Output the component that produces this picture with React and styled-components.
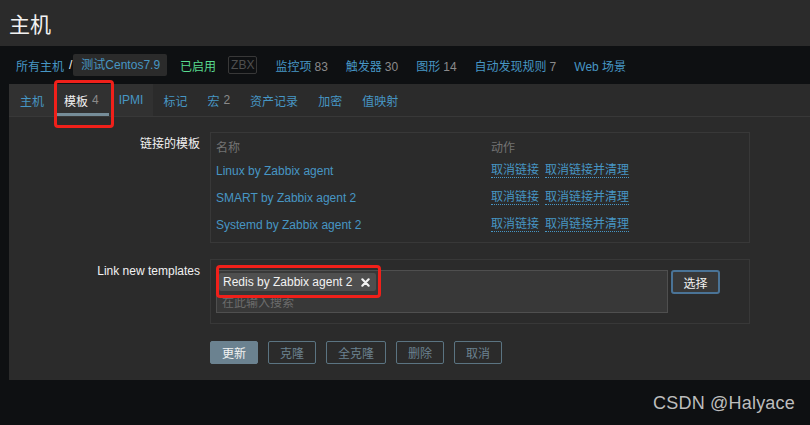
import styled, { createGlobalStyle } from "styled-components";

const GlobalStyle = createGlobalStyle`
    html, body {
        margin: 0;
        padding: 0;
        background: #0e1012;
    }
    body {
        font-family: "Liberation Sans", Arial, "Noto Sans CJK SC", sans-serif;
        font-size: 12px;
    }
`;

const linked = ["Linux by Zabbix agent", "SMART by Zabbix agent 2", "Systemd by Zabbix agent 2"];

const tabs = [
    { label: "主机", shaded: true },
    { label: "模板", count: 4, shaded: true, active: true },
    { label: "IPMI", shaded: true },
    { label: "标记" },
    { label: "宏", count: 2 },
    { label: "资产记录" },
    { label: "加密" },
    { label: "值映射" },
];

const navItems = [
    ["监控项", 83],
    ["触发器", 30],
    ["图形", 14],
    ["自动发现规则", 7],
    ["Web 场景"],
];

function TemplateTable() {
    return (
        <TableBox>
            <HeadCell>名称</HeadCell>
            <HeadCell>动作</HeadCell>
            {linked.map((name) => (
                <Row key={name}>
                    <Link>{name}</Link>
                    <Actions>
                        <DottedLink>取消链接</DottedLink>
                        <DottedLink>取消链接并清理</DottedLink>
                    </Actions>
                </Row>
            ))}
        </TableBox>
    );
}

export default function App() {
    return (
        <Page>
            <GlobalStyle />
            <Header>
                <h1>主机</h1>
            </Header>
            <Nav>
                <NavLink>所有主机</NavLink>
                <Slash>/</Slash>
                <HostChip>测试Centos7.9</HostChip>
                <Status>已启用</Status>
                <Zbx>ZBX</Zbx>
                {navItems.map(([label, count]) => (
                    <NavLink key={label} $spaced>
                        {label}
                        {count !== undefined && <Count $gap={3}>{count}</Count>}
                    </NavLink>
                ))}
            </Nav>
            <Panel>
                <TabList>
                    {tabs.map((t) => (
                        <Tab key={t.label} $shaded={t.shaded} $active={t.active}>
                            {t.label}
                            {t.count !== undefined && <Count $gap={4}>{t.count}</Count>}
                            {t.active && <Mark $top={-4} $left={0} $w={60} $h={48} />}
                        </Tab>
                    ))}
                </TabList>
                <Form>
                    <Label>链接的模板</Label>
                    <TemplateTable />
                    <Label>Link new templates</Label>
                    <NewBox>
                        <MultiSelect>
                            <Chip>
                                Redis by Zabbix agent 2
                                <svg width="9" height="9" viewBox="0 0 10 10">
                                    <path d="M1.5 1.5 L8.5 8.5 M8.5 1.5 L1.5 8.5" stroke="#f2f2f2" strokeWidth="2.4" strokeLinecap="round" />
                                </svg>
                            </Chip>
                            <Placeholder>在此输入搜索</Placeholder>
                            <Mark $top={-6} $left={-1} $w={165} $h={33} />
                        </MultiSelect>
                        <SelectButton>选择</SelectButton>
                    </NewBox>
                    <Buttons>
                        <Button $primary>更新</Button>
                        <Button>克隆</Button>
                        <Button>全克隆</Button>
                        <Button>删除</Button>
                        <Button>取消</Button>
                    </Buttons>
                </Form>
            </Panel>
            <Watermark>CSDN @Halyace</Watermark>
        </Page>
    );
}

const Page = styled.div`
    position: relative;
    width: 810px;
    height: 425px;
    overflow: hidden;
    background: #0e1012;
`;

const Header = styled.div`
    height: 46px;
    background: #2b2b2b;
    display: flex;
    align-items: center;
    padding-left: 9px;
    h1 {
        margin: 0;
        font-family: "Noto Sans CJK SC", sans-serif;
        font-weight: 400;
        font-size: 21px;
        color: #f2f2f2;
    }
`;

const Nav = styled.div`
    height: 38px;
    display: flex;
    align-items: center;
    padding-left: 16px;
    font-family: "Liberation Sans", "Noto Sans CJK SC", sans-serif;
`;

const NavLink = styled.span`
    color: #4796c4;
    margin-left: ${(p) => (p.$spaced ? "18px" : "0")};
`;

const Count = styled.span`
    color: #8a8a8a;
    margin-left: ${(p) => p.$gap}px;
`;

const Slash = styled.span`
    color: #f2f2f2;
    margin: 0 1px 0 5px;
`;

const HostChip = styled.span`
    height: 22px;
    line-height: 22px;
    padding: 0 7px 0 8px;
    background: #2b2b2b;
    border-radius: 2px;
    color: #4796c4;
`;

const Status = styled.span`
    color: #59db8f;
    margin-left: 13px;
`;

const Zbx = styled.span`
    margin-left: 12px;
    height: 16px;
    line-height: 16px;
    padding: 0 2px;
    border: 1px solid #383838;
    border-radius: 2px;
    color: #4f4f4f;
    font-size: 12px;
`;

const Panel = styled.div`
    margin-left: 9px;
    height: 296px;
    background: #2b2b2b;
`;

const TabList = styled.div`
    display: flex;
    height: 32px;
    border-bottom: 1px solid #383838;
    font-family: "Liberation Sans", "Noto Sans CJK SC", sans-serif;
`;

const Tab = styled.div`
    position: relative;
    display: flex;
    align-items: center;
    padding: 0 10px;
    background: ${(p) => (p.$shaded ? "#313131" : "transparent")};
    color: ${(p) => (p.$active ? "#f2f2f2" : "#4796c4")};
    &:first-child {
        padding-left: 11px;
    }
    &::after {
        content: "";
        display: ${(p) => (p.$active ? "block" : "none")};
        position: absolute;
        left: 3px;
        right: 0;
        bottom: 0;
        height: 3px;
        background: #768d99;
    }
`;

const Mark = styled.div`
    position: absolute;
    top: ${(p) => p.$top}px;
    left: ${(p) => p.$left}px;
    width: ${(p) => p.$w}px;
    height: ${(p) => p.$h}px;
    box-sizing: border-box;
    border: 3px solid #f0201a;
    border-radius: 4px;
    z-index: 2;
    pointer-events: none;
`;

const Form = styled.div`
    display: grid;
    grid-template-columns: 191px 540px;
    column-gap: 10px;
    row-gap: 16px;
    padding-top: 15px;
    align-items: start;
`;

const Label = styled.div`
    text-align: right;
    line-height: 18px;
    padding-top: 3px;
    color: #f2f2f2;
    font-family: "Liberation Sans", "Noto Sans CJK SC", sans-serif;
`;

const TableBox = styled.div`
    display: grid;
    grid-template-columns: 275px 1fr;
    grid-auto-rows: 27px;
    grid-template-rows: 18px;
    padding: 6px 5px 4px;
    border: 1px solid #383838;
    font-family: "Liberation Sans", "Noto Sans CJK SC", sans-serif;
`;

const HeadCell = styled.div`
    line-height: 18px;
    color: #737373;
`;

const Row = styled.div`
    display: contents;
    & > * {
        display: flex;
        align-items: center;
    }
`;

const Link = styled.span`
    color: #4796c4;
`;

const Actions = styled.div`
    gap: 6px;
`;

const DottedLink = styled.span`
    color: #4796c4;
    line-height: 14px;
    border-bottom: 1px dotted #4796c4;
`;

const NewBox = styled.div`
    display: flex;
    align-items: flex-start;
    padding: 10px 5px 10px 5px;
    border: 1px solid #383838;
`;

const MultiSelect = styled.div`
    position: relative;
    width: 452px;
    height: 43px;
    box-sizing: border-box;
    background: #383838;
    border: 1px solid #4f4f4f;
    font-family: "Liberation Sans", "Noto Sans CJK SC", sans-serif;
`;

const Chip = styled.div`
    display: inline-flex;
    align-items: center;
    gap: 9px;
    height: 18px;
    margin: 2px 0 0 2px;
    padding: 0 6px 0 4px;
    background: #4f4f4f;
    border-radius: 2px;
    color: #f2f2f2;
`;

const Placeholder = styled.div`
    height: 19px;
    line-height: 24px;
    padding-left: 5px;
    overflow: hidden;
    color: #6b6b6b;
`;

const SelectButton = styled.button`
    margin-left: 3px;
    width: 49px;
    height: 24px;
    padding: 0;
    background: #383838;
    border: 2px solid #4a7396;
    border-radius: 3px;
    color: #f2f2f2;
    font-family: "Noto Sans CJK SC", sans-serif;
    font-size: 12px;
`;

const Buttons = styled.div`
    grid-column: 2;
    display: flex;
    gap: 10px;
    margin-top: 1px;
`;

const Button = styled.button`
    height: 23px;
    padding: 0 11px;
    box-sizing: border-box;
    background: ${(p) => (p.$primary ? "#6b8290" : "transparent")};
    border: 1px solid ${(p) => (p.$primary ? "#6b8290" : "#5b7482")};
    border-radius: 2px;
    color: ${(p) => (p.$primary ? "#f2f2f2" : "#6b8290")};
    font-family: "Noto Sans CJK SC", sans-serif;
    font-size: 12px;
    min-width: 47px;
`;

const Watermark = styled.div`
    position: absolute;
    right: 15px;
    top: 393px;
    color: #bdbdbd;
    font-family: "Liberation Sans", Arial, sans-serif;
    font-size: 18px;
    letter-spacing: 0.2px;
`;
